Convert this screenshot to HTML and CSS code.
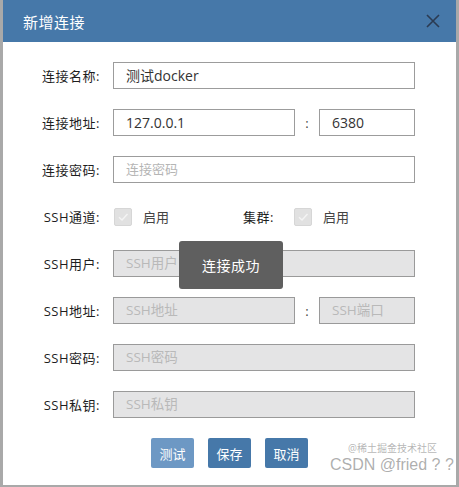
FILE: index.html
```html
<!DOCTYPE html>
<html lang="zh-CN">
<head>
<meta charset="utf-8">
<title>新增连接</title>
<link rel="stylesheet" href="styles.css">
</head>
<body>
<div class="window">
  <div class="header">
    <span class="title">新增连接</span>
    <svg class="close" width="14" height="14" viewBox="0 0 14 14"><path d="M1 1 L13 13 M13 1 L1 13" stroke="#2b3b52" stroke-width="1.6" fill="none"/></svg>
  </div>
  <div class="form">
    <div class="row">
      <label class="label">连接名称:</label>
      <div class="field wide">测试docker</div>
    </div>
    <div class="row">
      <label class="label">连接地址:</label>
      <div class="field host">127.0.0.1</div>
      <span class="colon">:</span>
      <div class="field port">6380</div>
    </div>
    <div class="row">
      <label class="label">连接密码:</label>
      <div class="field wide placeholder">连接密码</div>
    </div>
    <div class="row">
      <label class="label">SSH通道:</label>
      <div class="check-group">
        <span class="checkbox"><svg width="12" height="12" viewBox="0 0 12 12"><path d="M2 6.2 L5 9 L10.5 3" stroke="#f4f4f4" stroke-width="1.4" fill="none"/></svg></span>
        <span class="check-text">启用</span>
      </div>
      <span class="sublabel">集群:</span>
      <div class="check-group">
        <span class="checkbox"><svg width="12" height="12" viewBox="0 0 12 12"><path d="M2 6.2 L5 9 L10.5 3" stroke="#f4f4f4" stroke-width="1.4" fill="none"/></svg></span>
        <span class="check-text">启用</span>
      </div>
    </div>
    <div class="row">
      <label class="label">SSH用户:</label>
      <div class="field wide disabled">SSH用户</div>
    </div>
    <div class="row">
      <label class="label">SSH地址:</label>
      <div class="field host disabled">SSH地址</div>
      <span class="colon">:</span>
      <div class="field port disabled">SSH端口</div>
    </div>
    <div class="row">
      <label class="label">SSH密码:</label>
      <div class="field wide disabled">SSH密码</div>
    </div>
    <div class="row">
      <label class="label">SSH私钥:</label>
      <div class="field wide disabled">SSH私钥</div>
    </div>
    <div class="buttons">
      <button class="btn btn-light">测试</button>
      <button class="btn">保存</button>
      <button class="btn">取消</button>
    </div>
  </div>
  <div class="toast">连接成功</div>
  <div class="watermark"><div class="wm-small">@稀土掘金技术社区</div><div class="wm-big">CSDN @fried ? ?</div></div>
</div>
</body>
</html>
```
FILE: styles.css
```css
* { box-sizing: border-box; }
html, body { margin: 0; padding: 0; }
body {
  width: 459px;
  height: 487px;
  background: #a9a9a9;
  font-family: "Open Sans", "Noto Sans CJK SC", sans-serif;
  overflow: hidden;
}
.window {
  position: relative;
  width: 459px;
  height: 487px;
  border-left: 3px solid #a9a9a9;
  border-right: 3px solid #a9a9a9;
  border-bottom: 2px solid #a9a9a9;
  background: #fff;
}
.header {
  height: 42px;
  background: #4678a9;
  display: flex;
  align-items: center;
  justify-content: space-between;
  padding: 0 16px 0 20px;
}
.title {
  color: #fff;
  font-size: 15px;
  letter-spacing: 0.5px;
}
.close { display: block; }
.form {
  padding: 10px 0 0 0;
}
.row {
  height: 47px;
  display: flex;
  align-items: center;
}
.label {
  width: 97px;
  text-align: right;
  font-size: 13px;
  color: #1e1e1e;
  margin-right: 13px;
  letter-spacing: 0.5px;
}
.field {
  height: 27px;
  border: 1px solid #9c9c9c;
  font-size: 14px;
  color: #333;
  padding: 0 12px;
  display: flex;
  align-items: center;
  line-height: 1;
}
.wide { width: 302px; }
.host { width: 182px; }
.port { width: 96px; }
.colon {
  width: 24px;
  text-align: center;
  font-size: 13px;
  color: #444;
}
.placeholder { color: #b5b5b5; font-size: 13px; }
.disabled {
  background: #e4e4e5;
  border-color: #9a9a9a;
  color: #b9b9b9;
  font-size: 13.5px;
}
.check-group {
  display: flex;
  align-items: center;
  width: 130px;
}
.checkbox {
  width: 18px;
  height: 18px;
  background: #e1e1e1;
  border: 1px solid #d6d6d6;
  border-radius: 2px;
  display: flex;
  align-items: center;
  justify-content: center;
  margin-left: 1px;
  margin-right: 11px;
}
.check-text {
  font-size: 13px;
  color: #444;
}
.sublabel {
  font-size: 13px;
  color: #1e1e1e;
  margin-right: 19px;
  letter-spacing: 0.5px;
}
.buttons {
  display: flex;
  justify-content: center;
  gap: 14px;
  margin-top: 10px;
}
.btn {
  width: 43px;
  height: 30px;
  border: none;
  border-radius: 2px;
  background: #4678a9;
  color: #fff;
  font-family: inherit;
  font-size: 13px;
  padding: 0;
}
.btn-light { background: #6d98c4; }
.toast {
  position: absolute;
  left: 176px;
  top: 241px;
  width: 104px;
  height: 48px;
  border-radius: 3px;
  background: #5f5f5f;
  color: #fff;
  font-size: 14px;
  display: flex;
  align-items: center;
  justify-content: center;
  letter-spacing: 0.5px;
}
.watermark {
  position: absolute;
  left: 327px;
  top: 443px;
  width: 124px;
  display: flex;
  flex-direction: column;
  gap: 4px;
}
.wm-small {
  padding-left: 18px;
  font-size: 10px;
  line-height: 10px;
  height: 10px;
  color: rgba(150,150,150,0.7);
  white-space: nowrap;
}
.wm-big {
  font-family: "Liberation Sans", sans-serif;
  font-size: 16px;
  line-height: 16px;
  height: 16px;
  color: rgba(120,120,120,0.6);
  white-space: nowrap;
}
```
